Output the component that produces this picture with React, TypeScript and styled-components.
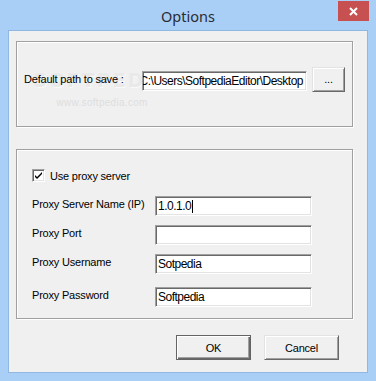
import styled, { createGlobalStyle } from 'styled-components';

const GlobalStyle = createGlobalStyle`
  html, body {
    margin: 0;
    padding: 0;
    background: #a9cff6;
  }
  * {
    box-sizing: border-box;
  }
`;

const Window = styled.div`
  width: 376px;
  height: 381px;
  display: flex;
  flex-direction: column;
  background: #a9cff6;
  font-family: 'Liberation Sans', Arial, sans-serif;
  font-size: 11px;
  letter-spacing: -0.2px;
  color: #000;
`;

const TitleBar = styled.div`
  height: 30px;
  display: grid;
  grid-template-columns: 1fr auto 1fr;
  align-items: start;
`;

const Title = styled.div`
  grid-column: 2;
  padding-top: 6px;
  font-family: 'Noto Sans', 'Open Sans', sans-serif;
  font-size: 14.5px;
  letter-spacing: 0;
  color: #2b2b33;
`;

const CloseButton = styled.div`
  grid-column: 3;
  justify-self: end;
  margin: 1px 7px 0 0;
  width: 31px;
  height: 20px;
  background: #c75050;
  display: flex;
  align-items: center;
  justify-content: center;
`;

const Client = styled.div`
  position: relative;
  flex: 1;
  margin: 0 8px 8px;
  border: 1px solid #90b7e2;
  background: #f0f0f0;
  padding: 10px 14px 0 7px;
`;

const GroupBox = styled.div<{ $height: number; $top?: number }>`
  width: 337px;
  height: ${(p) => p.$height}px;
  margin-top: ${(p) => p.$top ?? 0}px;
  border: 1px solid #a0a0a0;
  box-shadow: inset 1px 1px #fff, 1px 1px #fff;
`;

const PathGroup = styled(GroupBox)`
  padding: 25px 0 0 7px;
`;

const ProxyGroup = styled(GroupBox)`
  padding: 19px 0 0 15px;
`;

const PathRow = styled.div`
  position: relative;
  z-index: 1;
  display: flex;
  align-items: center;
  height: 25px;
`;

const Label = styled.span<{ $width: number }>`
  width: ${(p) => p.$width}px;
  flex-shrink: 0;
  line-height: 13px;
`;

const TextBox = styled.div<{ $width: number }>`
  width: ${(p) => p.$width}px;
  height: 20px;
  background: #fff;
  border: 1px solid;
  border-color: #a0a0a0 #fff #fff #a0a0a0;
  box-shadow: inset 1px 1px #696969, inset -1px -1px #e3e3e3;
  padding: 0 2px;
  display: flex;
  align-items: center;
  overflow: hidden;
  white-space: nowrap;
  font-size: 12px;
  letter-spacing: -0.5px;
`;

const PathBox = styled(TextBox)`
  justify-content: flex-end;
  padding-right: 3px;
  margin-top: 2px;
`;

const Caret = styled.span`
  display: inline-block;
  width: 1px;
  height: 13px;
  background: #000;
  margin-left: 1px;
`;

const Button = styled.div<{ $width: number; $height: number; $default?: boolean }>`
  width: ${(p) => p.$width}px;
  height: ${(p) => p.$height}px;
  flex-shrink: 0;
  background: #f0f0f0;
  display: flex;
  align-items: center;
  justify-content: center;
  border: 1px solid;
  border-color: ${(p) => (p.$default ? '#646464' : '#e3e3e3 #696969 #696969 #e3e3e3')};
  box-shadow: ${(p) =>
    p.$default
      ? 'inset 1px 1px #fff, inset -1px -1px #696969, inset -2px -2px #a0a0a0'
      : 'inset 1px 1px #fff, inset -1px -1px #a0a0a0'};
  font-size: 11px;
`;

const BrowseButton = styled(Button)`
  margin-left: 5px;
  padding-bottom: 2px;
`;

const CheckRow = styled.label`
  display: flex;
  align-items: center;
  gap: 5px;
  height: 13px;
`;

const CheckBox = styled.span`
  width: 13px;
  height: 13px;
  background: #fff;
  border: 1px solid;
  border-color: #a0a0a0 #fff #fff #a0a0a0;
  box-shadow: inset 1px 1px #696969, inset -1px -1px #e3e3e3;
  display: flex;
  align-items: center;
  justify-content: center;
`;

const FieldRow = styled.div<{ $top: number }>`
  display: flex;
  align-items: flex-start;
  margin-top: ${(p) => p.$top}px;

  ${Label} {
    padding-top: 2px;
  }
`;

const ButtonRow = styled.div`
  display: flex;
  justify-content: flex-end;
  gap: 13px;
  width: 337px;
  padding-right: 14px;
  margin-top: 16px;
`;

/* faint watermark lying over the first group */
const Watermark = styled.div`
  position: absolute;
  left: 24px;
  top: 38px;
  display: flex;
  flex-direction: column;
  align-items: center;
  pointer-events: none;
`;

const WatermarkLogo = styled.span`
  font-family: 'DejaVu Sans', sans-serif;
  font-size: 19px;
  line-height: 22px;
  font-weight: bold;
  letter-spacing: 2px;
  color: #e9e9e9;
  text-shadow: 1px 1px #f9f9f9;
`;

const WatermarkUrl = styled.span`
  font-size: 10px;
  line-height: 12px;
  letter-spacing: 0.3px;
  margin-top: 6px;
  color: #dedede;
`;

const fields = [
  { label: 'Proxy Server Name (IP)', value: '1.0.1.0', top: 14, caret: true },
  { label: 'Proxy Port', value: '', top: 9 },
  { label: 'Proxy Username', value: 'Sotpedia', top: 9 },
  { label: 'Proxy Password', value: 'Softpedia', top: 13 },
];

const App = () => {
  return (
    <>
      <GlobalStyle />
      <Window>
        <TitleBar>
          <Title>Options</Title>
          <CloseButton>
            <svg width="9" height="9" viewBox="0 0 9 9">
              <path d="M1 1 L8 8 M8 1 L1 8" stroke="#fff" strokeWidth="2" />
            </svg>
          </CloseButton>
        </TitleBar>
        <Client>
          <Watermark>
            <WatermarkLogo>SOFTPEDIA</WatermarkLogo>
            <WatermarkUrl>www.softpedia.com</WatermarkUrl>
          </Watermark>
          <PathGroup $height={86}>
            <PathRow>
              <Label $width={118}>Default path to save :</Label>
              <PathBox $width={165}>C:\Users\SoftpediaEditor\Desktop</PathBox>
              <BrowseButton $width={33} $height={25}>...</BrowseButton>
            </PathRow>
          </PathGroup>
          <ProxyGroup $height={170} $top={22}>
            <CheckRow>
              <CheckBox>
                <svg width="7" height="7" viewBox="0 0 7 7">
                  <path d="M0 3 L2 5 L7 0 L7 2 L2 7 L0 5 Z" fill="#000" />
                </svg>
              </CheckBox>
              Use proxy server
            </CheckRow>
            {fields.map((f) => (
              <FieldRow key={f.label} $top={f.top}>
                <Label $width={123}>{f.label}</Label>
                <TextBox $width={157}>
                  {f.value}
                  {f.caret && <Caret />}
                </TextBox>
              </FieldRow>
            ))}
          </ProxyGroup>
          <ButtonRow>
            <Button $width={75} $height={25} $default>
              OK
            </Button>
            <Button $width={75} $height={25}>
              Cancel
            </Button>
          </ButtonRow>
        </Client>
      </Window>
    </>
  );
};

export default App;
